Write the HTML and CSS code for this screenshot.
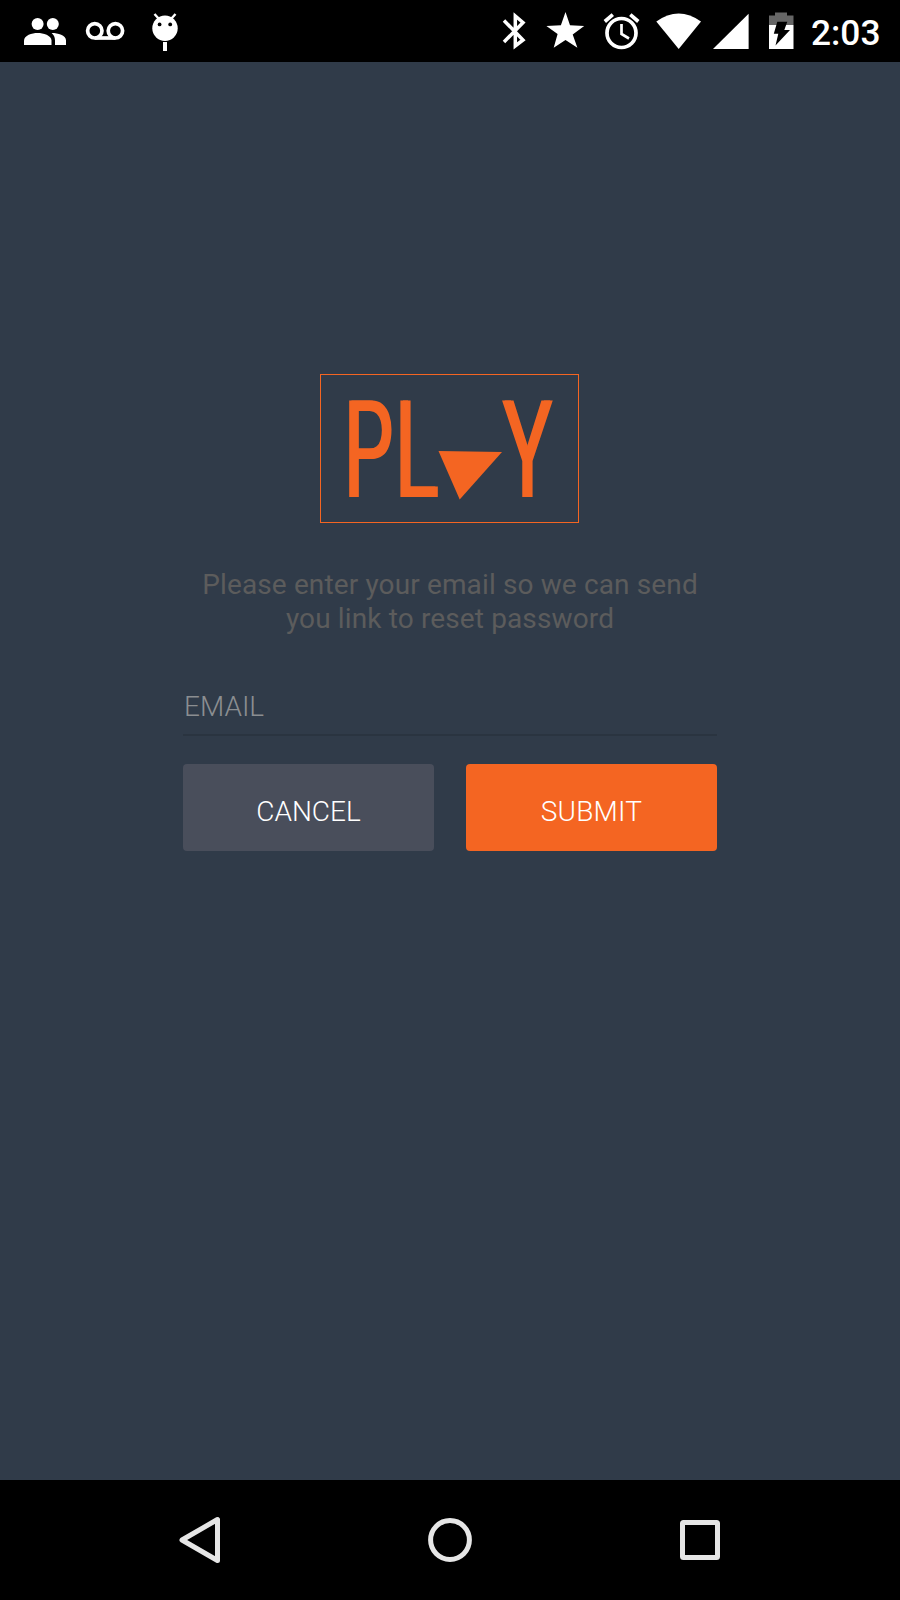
FILE: index.html
```html
<!DOCTYPE html>
<html lang="en">
<head>
<meta charset="utf-8">
<title>Play – Reset password</title>
<link rel="stylesheet" href="styles.css">
</head>
<body>
<div class="screen">
  <header class="status">
    <svg class="status-left" width="200" height="62" viewBox="0 0 200 62" fill="#fff">
      <circle cx="37.6" cy="24" r="6"/><circle cx="52.8" cy="24" r="6"/>
      <path d="M24 45v-4.6C24 35.500 32 33 37.600 33S51.500 35.500 51.500 40.400V45z"/>
      <path d="M51.600 33.100C57.500 33 66 35.500 66 40.300V45H55V40.300C55 37 53.600 34.800 51.600 33.100z"/>
      <g fill="none" stroke="#fff" stroke-width="3.700"><circle cx="94.800" cy="30.800" r="7.200"/><circle cx="115.400" cy="30.800" r="7.200"/><path d="M94.800 38h20.600"/></g>
      <circle cx="165" cy="28.200" r="12.700"/>
      <path d="M154.500 14l4.500 5M175.500 14l-4.500 5" stroke="#fff" stroke-width="2.400"/>
      <path d="M163 42h4v9h-4z"/>
      <circle cx="159.600" cy="24.400" r="1.900" fill="#000"/><circle cx="170.200" cy="24.400" r="1.900" fill="#000"/>
    </svg>
    <svg class="status-right" width="310" height="62" viewBox="490 0 310 62" fill="#fff">
      <path d="M504 20.500L523 40 515.300 46V16L523 22.500 504 42" fill="none" stroke="#fff" stroke-width="3.500"/>
      <path d="M565.500 12l4.500 13.200 14.200.7-11.500 8.600 4.700 13.300-11.900-7.800-11.800 7.800 3.900-13.700-11.200-8.200 14.500-.7z"/>
      <g fill="none" stroke="#fff"><circle cx="621.500" cy="33" r="14.500" stroke-width="3.700"/><path d="M621.500 24v10l7.500 4.500" stroke-width="2.700"/><path d="M604.800 21.500l8-6.800M638.300 21.500l-8-6.800" stroke-width="3.700"/></g>
      <path d="M656.300 21.600Q678.700 5.500 701 21.600L678.700 49z"/>
      <path d="M713 49L748.600 13.800V49z"/>
      <path d="M769 25v-9.500h6V12.600h12V15.500h6.500V25z" fill="#666"/>
      <path d="M769 25h24.500v24H769z"/>
      <path d="M777.300 21.700h10l-3 8.300h5.700l-14.500 15.500 2.800-11.700h-4.500z" fill="#000"/>
    </svg>
    <time class="clock">2:03</time>
  </header>

  <main class="content">
    <div class="logo">
      <span class="letter letter-p">P</span>
      <span class="letter letter-l">L</span>
      <svg class="mark" width="64" height="50" viewBox="0 0 64 50" fill="#f46522"><path d="M.5 0L64 .9 21.700 48.500z"/></svg>
      <span class="letter letter-y">Y</span>
    </div>
    <p class="hint">Please enter your email so we can send<br>you link to reset password</p>
    <div class="field">EMAIL</div>
    <div class="actions">
      <button class="btn cancel" type="button"><span>CANCEL</span></button>
      <button class="btn submit" type="button"><span>SUBMIT</span></button>
    </div>
  </main>

  <nav class="navbar">
    <svg width="900" height="120" viewBox="0 1480 900 120" fill="none" stroke="#e6e6e6" stroke-width="5" stroke-linejoin="round">
      <path d="M217.500 1519.500v41L182 1540z"/>
      <circle cx="450" cy="1540" r="19.400"/>
      <rect x="682.500" y="1522.500" width="35" height="35" rx="1"/>
    </svg>
  </nav>
</div>
</body>
</html>
```
FILE: styles.css
```css
* { box-sizing: border-box; }
body { margin: 0; font-family: Roboto, "Liberation Sans", sans-serif; }
.screen { width: 900px; height: 1600px; display: flex; flex-direction: column; background: #303b49; overflow: hidden; }
svg { display: block; flex: none; }

.status { height: 62px; background: #000; display: flex; flex: none; }
.status-right { margin-left: 290px; }
.clock { margin-left: 11px; color: #fff; font-size: 35.3px; font-weight: 500; line-height: 66px; white-space: nowrap; }

.content { flex: 1; display: flex; flex-direction: column; align-items: center; padding-top: 312px; }
.logo { width: 259px; height: 149px; margin-right: 1px; border: 1px solid #f46522; display: flex; padding: 25px 0 0 28px; flex: none; }
.letter { height: 97px; line-height: 101px; font-size: 136px; color: #f46522; text-shadow: 4px 0 0 #f46522; transform-origin: 0 50%; flex: none; white-space: nowrap; }
.letter-p { width: 51px; transform: translateX(-6.2px) scaleX(.575); }
.letter-l { width: 38px; transform: translateX(-6.2px) scaleX(.595); }
.letter-y { width: 53px; transform: translateX(-.5px) scaleX(.605); }
.mark { margin-top: 51px; }

.hint { margin: 45px 0 0; font-size: 28px; line-height: 34px; color: #5c5c5c; text-align: center; letter-spacing: .13px; white-space: nowrap; }
.field { width: 534px; height: 60px; margin-top: 40px; padding: 14px 0 0 1px; border-bottom: 2px solid #2a3440; font-size: 28px; font-weight: 300; line-height: 34px; color: #8b8e91; }
.actions { width: 534px; margin-top: 28px; display: flex; justify-content: space-between; }
.btn { width: 251px; height: 87px; border: 0; border-radius: 4px; padding: 9px 0 0; font: 300 28px/34px Roboto, "Liberation Sans", sans-serif; color: #fff; }
.cancel { background: #494e5b; }
.submit { background: #f46522; letter-spacing: .2px; }

.navbar { height: 120px; background: #000; flex: none; }
```
